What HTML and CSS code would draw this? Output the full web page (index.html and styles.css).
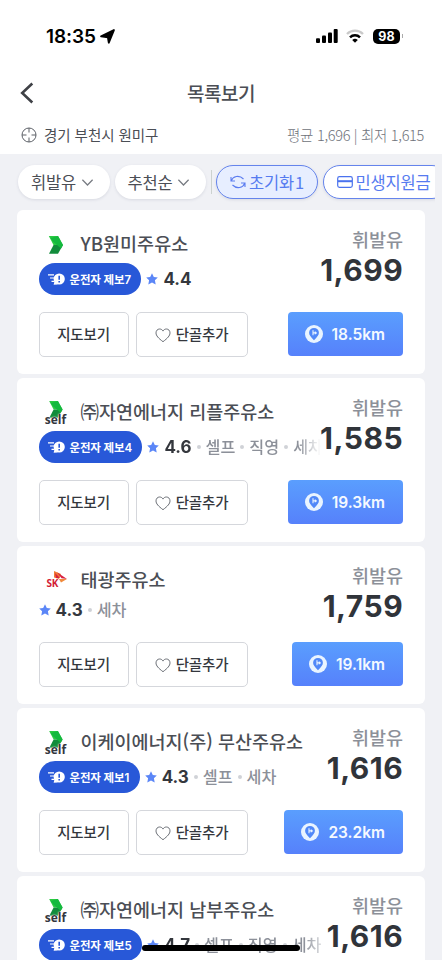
FILE: index.html
```html
<!DOCTYPE html>
<html lang="ko">
<head>
<meta charset="utf-8">
<meta name="viewport" content="width=device-width">
<title>목록보기</title>
<link rel="stylesheet" href="styles.css">
</head>
<body>
<svg class="defs" aria-hidden="true">
  <defs>
    <symbol id="logo-sign" viewBox="0 0 15 18"><path d="M.8 0H10l5 9H5.500z" fill="#2bcb42"/><path d="M15 9l-5 8.700H1L5.500 9z" fill="#118c3b"/><path d="M10 0l5 9-2 3.500L5 5.500 2.500 2z" fill="#14b93e"/></symbol>
    <symbol id="report" viewBox="0 0 17 12"><path d="M0 1.800h6M2 5h4M3.500 8.300h3" stroke="#fff" stroke-width="1.200"/><circle cx="11.200" cy="6" r="5.600" fill="#fff"/><path d="M5.600 11.700l1-4 3 3.700z" fill="#fff"/><path d="M11.200 2.800v3.900M11.200 8v1.500" stroke="#2858d8" stroke-width="1.600"/></symbol>
    <symbol id="star" viewBox="0 0 12 12"><path d="M6 .3l1.800 3.600 4 .5-2.900 2.800.8 4.200L6 9.400l-3.700 2 .8-4.200L.2 4.400l4-.5z" fill="#5b86f7"/></symbol>
    <symbol id="heart" viewBox="0 0 16 15"><path d="M8 13.700C3.400 10.200 1 7.700 1 4.900 1 2.600 2.600 1 4.600 1 6.200 1 7.300 1.800 8 3.100 8.700 1.800 9.800 1 11.400 1 13.400 1 15 2.600 15 4.900c0 2.800-2.400 5.300-7 8.800z" fill="none" stroke="#6b6f76" stroke-width="1"/></symbol>
    <symbol id="pin" viewBox="0 0 18 18"><circle cx="9" cy="9" r="9" fill="#e9f4ff"/><path d="M9 15.200C5.700 12 4.100 10 4.100 7.800a4.900 4.900 0 0 1 9.800 0c0 2.200-1.600 4.200-4.900 7.400z" fill="#5088f8"/><path d="M8 5.200v5M8 7.900h2.500" stroke="#e9f4ff" stroke-width="1.100" fill="none"/><path d="M9.800 6.100L12.200 7.900 9.800 9.700z" fill="#e9f4ff"/></symbol>
    <symbol id="down" viewBox="0 0 14 9"><path d="M1.500 1.500L7 7.200l5.500-5.700" fill="none" stroke="#777b82" stroke-width="1.300"/></symbol>
  </defs>
</svg>
<div class="screen">
  <header class="top">
    <div class="status">
      <span class="time">18:35</span>
      <svg class="arrow" viewBox="0 0 15 15"><path d="M13.900 1.100L8.800 13.700 7.900 8.400 1.100 7.300z" fill="#000" stroke="#000" stroke-width="1.900" stroke-linejoin="round"/></svg>
      <span class="grow"></span>
      <svg class="signal" viewBox="0 0 22 14"><rect x="0" y="9.300" width="4" height="4.700" rx="1"/><rect x="6" y="6.500" width="4" height="7.500" rx="1"/><rect x="12" y="3.500" width="4" height="10.500" rx="1"/><rect x="17.700" y="0" width="4" height="14" rx="1"/></svg>
      <svg class="wifi" viewBox="0 0 18 14"><path d="M1 5a11.300 11.300 0 0 1 16 0" fill="none" stroke="#c9c9c9" stroke-width="2.300"/><path d="M4 8.300a7 7 0 0 1 10 0" fill="none" stroke="#000" stroke-width="2.400"/><path d="M9 13.800L6.200 11a4 4 0 0 1 5.600 0z"/></svg>
      <span class="battery">98</span><span class="nub"></span>
    </div>
    <div class="nav">
      <svg class="back" viewBox="0 0 14 22"><path d="M12.300 1.500L2.200 11l10.100 9.500" fill="none" stroke="#3f4146" stroke-width="2.600"/></svg>
      <h1>목록보기</h1>
    </div>
    <div class="place">
      <svg class="target" viewBox="0 0 16 16" fill="none" stroke="#5c6067"><circle cx="8" cy="8" r="7" stroke-width="1"/><path d="M8 1v4.500M8 10.500V15M1 8h4.500M10.500 8H15" stroke-width="1"/></svg>
      <span>경기 부천시 원미구</span>
      <span class="avg">평균 1,696 | 최저 1,615</span>
    </div>
  </header>
  <nav class="chips">
    <span class="chip fuel">휘발유<svg class="down"><use href="#down"/></svg></span>
    <span class="chip sort">추천순<svg class="down"><use href="#down"/></svg></span>
    <i class="rule"></i>
    <span class="chip reset"><svg class="cycle" viewBox="0 0 16 16" fill="none" stroke="#5b7cf0" stroke-width="1.100"><path d="M1 3v4h4M1.200 6.800C3 2.200 9 .6 13.500 5M15 13V9h-4M14.800 9.200C13 13.800 7 15.400 2.500 11"/></svg>초기화<b>1</b></span>
    <span class="chip aid"><svg class="bankcard" viewBox="0 0 16 12" fill="none" stroke="#4a72ee"><rect x=".7" y=".7" width="14.600" height="10.600" rx="1.800" stroke-width="1.200"/><path d="M1 5.200h14" stroke-width="2"/></svg>민생지원금</span>
  </nav>
  <main class="list">
    <article class="card">
      <div class="info">
        <div class="left">
          <div class="name"><span class="logo"><svg class="sign"><use href="#logo-sign"/></svg></span><h2>YB원미주유소</h2></div>
          <div class="meta"><span class="pill"><svg><use href="#report"/></svg>운전자 제보7</span><svg class="star"><use href="#star"/></svg><b>4.4</b></div>
        </div>
        <div class="right"><span>휘발유</span><strong>1,699</strong></div>
      </div>
      <div class="actions"><span class="btn map">지도보기</span><span class="btn fav"><svg><use href="#heart"/></svg>단골추가</span><span class="go"><svg><use href="#pin"/></svg>18.5km</span></div>
    </article>
    <article class="card">
      <div class="info">
        <div class="left">
          <div class="name"><span class="logo self"><svg class="sign"><use href="#logo-sign"/></svg><em>self</em></span><h2>㈜자연에너지 리플주유소</h2></div>
          <div class="meta fade"><span class="pill"><svg><use href="#report"/></svg>운전자 제보4</span><svg class="star"><use href="#star"/></svg><b>4.6</b><i class="dot"></i><span class="tag">셀프</span><i class="dot"></i><span class="tag">직영</span><i class="dot"></i><span class="tag">세차</span></div>
        </div>
        <div class="right"><span>휘발유</span><strong>1,585</strong></div>
      </div>
      <div class="actions"><span class="btn map">지도보기</span><span class="btn fav"><svg><use href="#heart"/></svg>단골추가</span><span class="go"><svg><use href="#pin"/></svg>19.3km</span></div>
    </article>
    <article class="card">
      <div class="info">
        <div class="left">
          <div class="name"><span class="logo sk"><em>SK</em><svg viewBox="0 0 13 12"><path d="M0 0l7 3-2 5-5-1.500z" fill="#ef7b35"/><path d="M3 1.300L13 8 7.500 7.300z" fill="#d9203f"/><path d="M5 8l8 0-6 3.500z" fill="#f08a3c"/><path d="M1 2l5 5-4 0z" fill="#d9203f"/></svg></span><h2>태광주유소</h2></div>
          <div class="meta plain"><svg class="star"><use href="#star"/></svg><b>4.3</b><i class="dot"></i><span class="tag">세차</span></div>
        </div>
        <div class="right"><span>휘발유</span><strong>1,759</strong></div>
      </div>
      <div class="actions"><span class="btn map">지도보기</span><span class="btn fav"><svg><use href="#heart"/></svg>단골추가</span><span class="go"><svg><use href="#pin"/></svg>19.1km</span></div>
    </article>
    <article class="card">
      <div class="info">
        <div class="left">
          <div class="name"><span class="logo self"><svg class="sign"><use href="#logo-sign"/></svg><em>self</em></span><h2>이케이에너지(주) 무산주유소</h2></div>
          <div class="meta"><span class="pill"><svg><use href="#report"/></svg>운전자 제보1</span><svg class="star"><use href="#star"/></svg><b>4.3</b><i class="dot"></i><span class="tag">셀프</span><i class="dot"></i><span class="tag">세차</span></div>
        </div>
        <div class="right"><span>휘발유</span><strong>1,616</strong></div>
      </div>
      <div class="actions"><span class="btn map">지도보기</span><span class="btn fav"><svg><use href="#heart"/></svg>단골추가</span><span class="go"><svg><use href="#pin"/></svg>23.2km</span></div>
    </article>
    <article class="card">
      <div class="info">
        <div class="left">
          <div class="name"><span class="logo self"><svg class="sign"><use href="#logo-sign"/></svg><em>self</em></span><h2>㈜자연에너지 남부주유소</h2></div>
          <div class="meta fade"><span class="pill"><svg><use href="#report"/></svg>운전자 제보5</span><svg class="star"><use href="#star"/></svg><b>4.7</b><i class="dot"></i><span class="tag">셀프</span><i class="dot"></i><span class="tag">직영</span><i class="dot"></i><span class="tag">세차</span></div>
        </div>
        <div class="right"><span>휘발유</span><strong>1,616</strong></div>
      </div>
    </article>
  </main>
  <div class="home"></div>
</div>
</body>
</html>
```
FILE: styles.css
```css
* { box-sizing: border-box; }
body { margin: 0; font-family: "Noto Sans CJK KR", sans-serif; color: #4b4e55; }
svg { display: block; flex: none; }
.defs { position: absolute; width: 0; height: 0; }
.screen { position: relative; width: 442px; height: 960px; overflow: hidden; background: #f0f1f5; white-space: nowrap; }
.top { height: 154px; background: #fff; }
.status { height: 72px; display: flex; align-items: center; padding: 0 39px 0 46px; font-family: Inter, sans-serif; color: #000; }
.time { font-size: 19px; font-weight: 600; letter-spacing: -.1px; }
.arrow { width: 15px; height: 15px; margin-left: 4px; }
.grow { flex: 1; }
.signal { width: 22px; height: 14px; }
.wifi { width: 18px; height: 14px; margin: 0 9px 0 8px; }
.battery { width: 27px; height: 15px; border-radius: 5px; background: #000; color: #fff; font-size: 12.500px; font-weight: 700; line-height: 15px; text-align: center; }
.nub { width: 1px; height: 4px; margin-left: 2px; background: #aaa; }
.nav { height: 41px; display: grid; grid-template-columns: 40px 1fr 40px; align-items: center; }
.back { width: 14px; height: 22px; margin-left: 20px; }
h1 { margin: 0; font-size: 19px; line-height: 24px; font-weight: 500; letter-spacing: -.5px; text-align: center; color: #4b4e55; }
.place { height: 41px; display: flex; align-items: center; padding: 2px 18px 0 21px; font-size: 14.500px; letter-spacing: -.05px; color: #4b4e55; }
.place span { padding-bottom: 1px; }
.target { width: 16px; height: 16px; margin-right: 7px; }
.place .avg { margin-left: auto; font-size: 14.500px; font-weight: 300; letter-spacing: -.3px; color: #6e727a; }
.chips { width: 435px; height: 56px; overflow: hidden; display: flex; align-items: center; padding-left: 18px; }
.chip { flex: none; height: 34px; border-radius: 17px; background: #fff; display: flex; align-items: center; padding-left: 13px; font-size: 16.500px; letter-spacing: -.2px; color: #4b4e55; box-shadow: 0 1px 3px rgba(70,80,110,.14); }
.fuel, .sort { width: 91.500px; margin-right: 5px; }
.down { width: 13px; height: 9px; margin-left: 5px; }
.rule { flex: none; width: 1px; height: 24px; background: #ccd2cf; margin-right: 4px; }
.reset { width: 102px; background: #e7eeff; border: 1px solid #6584ec; color: #567bf0; margin-right: 4.500px; }
.reset b { font-weight: 400; margin-left: 1px; }
.cycle { width: 16px; height: 16px; margin-right: 3px; }
.aid { width: 126px; border: 1px solid #6584ec; color: #567bf0; }
.bankcard { width: 16px; height: 12px; margin-right: 3px; }
.list { display: flex; flex-direction: column; gap: 4px; padding: 0 17px; }
.card { background: #fff; border-radius: 6px; padding: 0 22px 17px 21.500px; }
.info { display: flex; position: relative; }
.left { flex: 1; min-width: 0; }
.name { height: 52px; padding-top: 20px; display: flex; }
.logo { width: 34px; height: 32px; margin-right: 8px; flex: none; display: flex; flex-direction: column; align-items: center; padding-top: 6px; }
.sign { width: 15px; height: 18px; }
.self { padding-top: 3px; }
.self .sign { height: 17px; }
em { font-style: normal; font-family: "Open Sans", sans-serif; font-weight: 700; font-size: 12px; line-height: 12px; color: #34373e; }
.self em { margin-top: -4px; text-shadow: 0 0 1px #fff, 0 0 2px #fff; }
.sk { flex-direction: row; align-items: flex-start; padding: 5px 0 0 8px; }
.sk em { color: #d31c36; font-size: 10px; letter-spacing: -.3px; margin-top: 6px; }
.sk svg { width: 13px; height: 12px; margin-left: -4px; }
h2 { margin: -1px 0 0; font-size: 18.500px; line-height: 28px; font-weight: 500; letter-spacing: 0; color: #4b4e55; }
.meta { height: 33px; margin-right: -1px; overflow: hidden; display: flex; align-items: center; }
.meta > * { flex: none; }
.fade { -webkit-mask-image: linear-gradient(90deg, #000 calc(100% - 24px), transparent); mask-image: linear-gradient(90deg, #000 calc(100% - 24px), transparent); }
.plain { height: 27px; padding-bottom: 3px; }
.pill { height: 32px; border-radius: 16px; background: #2858d8; color: #fff; font-family: Inter, "Noto Sans CJK KR", sans-serif; font-size: 11.500px; font-weight: 600; letter-spacing: -.15px; display: flex; align-items: center; padding: 0 10.500px 0 9px; margin-right: 5px; }
.pill svg { width: 17px; height: 12px; margin-right: 5px; }
.star { width: 12px; height: 12px; }
.meta b { font-family: Inter, sans-serif; font-size: 17px; font-weight: 700; margin-left: 5px; color: #34373d; }
.dot { width: 4px; height: 4px; border-radius: 50%; background: #d0d2d7; margin: 0 5px; }
.tag { font-size: 16.200px; font-weight: 500; padding-bottom: 2px; color: #8c9099; }
.right { display: flex; flex-direction: column; align-items: flex-end; padding-top: 18px; }
.right span { margin-top: -1px; font-size: 18.500px; line-height: 25px; font-weight: 500; color: #8c9099; }
.right strong { font-family: Inter, sans-serif; font-size: 30px; font-weight: 700; line-height: 36px; letter-spacing: .5px; margin-right: -.2px; color: #30343a; }
.actions { display: flex; padding-top: 17px; }
.btn { height: 45px; border: 1px solid #d5d7dc; border-radius: 5px; display: flex; align-items: center; justify-content: center; font-size: 14.500px; line-height: 20px; padding-bottom: 1px; font-weight: 500; letter-spacing: -.2px; color: #34373d; }
.map { width: 90px; margin-right: 7px; }
.fav { width: 112px; }
.fav svg { width: 16px; height: 15px; margin: 2px 5px 0 0; }
.go { margin-left: auto; height: 44px; border-radius: 4px; padding: 0 18px 0 17px; display: flex; align-items: center; background: linear-gradient(#5a9efe, #5681fb); color: #f4f9ff; font-family: Inter, sans-serif; font-size: 15.500px; font-weight: 600; }
.go svg { width: 18px; height: 18px; margin-right: 9px; }
.home { position: absolute; left: 142px; top: 945px; width: 158px; height: 6px; border-radius: 3px; background: #000; }
```
